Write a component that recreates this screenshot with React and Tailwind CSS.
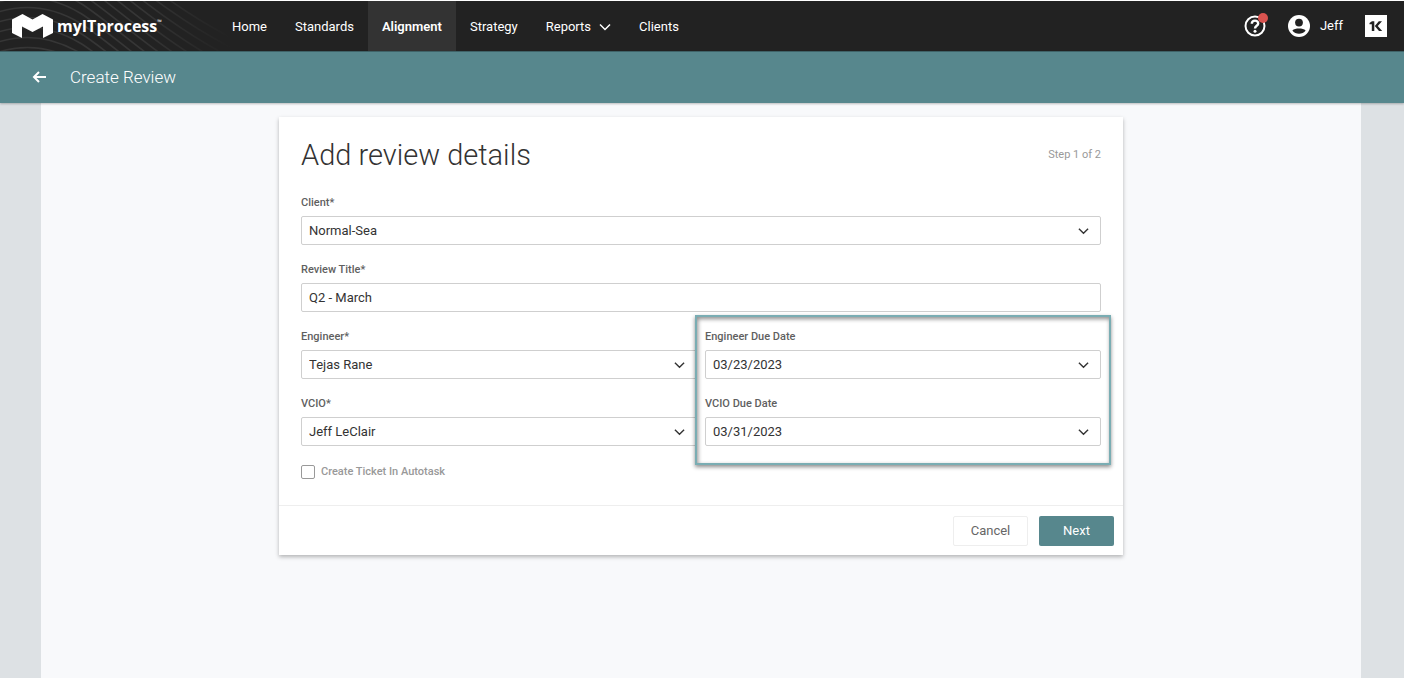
import React, { useState } from 'react';

const navItems = [
  { label: 'Home' },
  { label: 'Standards' },
  { label: 'Alignment', active: true },
  { label: 'Strategy' },
  { label: 'Reports', hasMenu: true },
  { label: 'Clients' },
];

const waveOffsets = [-2, -1, 0, 1, 2, 3, 4, 5, 6, 7, 8, 9, 10, 11];

const HeaderWaves = () => (
  <svg
    className="absolute left-0 top-0 h-[50px] w-[230px]"
    viewBox="0 0 230 50"
    fill="none"
    stroke="url(#wave-fade)"
    strokeWidth="1.6"
    aria-hidden="true"
  >
    <defs>
      <linearGradient id="wave-fade" gradientUnits="userSpaceOnUse" x1="0" y1="0" x2="230" y2="0">
        <stop offset="0" stopColor="#363636" />
        <stop offset="0.6" stopColor="#363636" />
        <stop offset="1" stopColor="#222222" />
      </linearGradient>
    </defs>
    {waveOffsets.map((n) => (
      <path key={n} d={`M-10 ${34 - n * 10} C20 ${22 - n * 10} 50 ${24 - n * 10} 80 ${42 - n * 10} S160 ${110 - n * 10} 230 ${146 - n * 10}`} />
    ))}
  </svg>
);

const LogoMark = () => (
  <svg className="h-6 w-[41px]" viewBox="0 0 41 24" fill="#ffffff" aria-hidden="true">
    <path d="M0 5.5 L10.5 0 L20.5 5.5 L30.5 0 L41 5.5 V19 L31 24 V12.5 L20.5 18 L10 12.5 V24 L0 19 Z" />
  </svg>
);

const HelpIcon = () => (
  <svg className="size-[22px]" viewBox="0 0 22 22" fill="none" stroke="#ffffff" aria-hidden="true">
    <circle cx="11" cy="11" r="9.5" strokeWidth="2" />
    <path d="M7.8 8.8 C7.8 4.6 14.2 4.6 14.2 8.5 C14.2 10.8 11 10.8 11 13.4" strokeWidth="2.4" />
    <circle cx="11" cy="16.3" r="1.5" fill="#ffffff" stroke="none" />
  </svg>
);

const AvatarIcon = () => (
  <svg className="size-[22px]" viewBox="0 0 22 22" aria-hidden="true">
    <circle cx="11" cy="11" r="11" fill="#ffffff" />
    <circle cx="11" cy="7.6" r="3.9" fill="#222222" />
    <path d="M4.4 15.4 C7 12.8 15 12.8 17.6 15.4 C14.6 19.8 7.4 19.8 4.4 15.4 Z" fill="#222222" />
  </svg>
);

const KaseyaIcon = () => (
  <svg className="size-[22px]" viewBox="0 0 22 22" aria-hidden="true">
    <rect width="22" height="22" fill="#ffffff" />
    <path d="M4.5 8 L7 6.2 H9.3 V16 H6.8 V9.2 H4.5 Z" fill="#222222" />
    <path d="M13.8 6.2 H17 L12.8 11 L17.2 16 H14 L9.8 11 Z" fill="#222222" />
  </svg>
);

const Chevron = ({ className }) => (
  <svg className={className} viewBox="0 0 12 8" fill="none" stroke="currentColor" aria-hidden="true">
    <path d="M1 1.5 L6 6.5 L11 1.5" strokeWidth="1.5" />
  </svg>
);

const fieldClass =
  'block h-[29px] w-full appearance-none rounded-[2px] border border-[#cfcfcf] bg-white px-[7px] text-[13px] text-[#333333] outline-none';

const Field = ({ id, label, children }) => (
  <div className="flex flex-col gap-[5px]">
    <label htmlFor={id} className="text-[11px] leading-4 font-medium text-[#5f5f5f]">
      {label}
    </label>
    {children}
  </div>
);

const SelectField = ({ id, label, value }) => (
  <Field id={id} label={label}>
    <div className="relative">
      <select id={id} defaultValue={value} className={fieldClass}>
        <option value={value}>{value}</option>
      </select>
      <Chevron className="pointer-events-none absolute top-[11px] right-3 h-2 w-[11px] text-[#333333]" />
    </div>
  </Field>
);

const Header = () => (
  <header className="relative flex h-[51px] items-center justify-between border-t border-white bg-[#222222] pr-[17px] pl-3 text-[13px] text-white">
    <HeaderWaves />
    <div className="relative flex h-full items-center">
      <a href="#home" className="flex w-[206px] items-center gap-1" aria-label="myITprocess">
        <LogoMark />
        <span className="flex items-start font-['Open_Sans',sans-serif] text-[16px] leading-5 font-bold">
          myITprocess
          <span className="text-[6px] leading-3">™</span>
        </span>
      </a>
      <nav className="flex h-full">
        {navItems.map((item) => (
          <a
            key={item.label}
            href={`#${item.label.toLowerCase()}`}
            className={
              item.active
                ? 'flex items-center bg-[#333333] px-[14px] pt-0.5 font-semibold'
                : 'flex items-center gap-2 px-[14px] pt-0.5'
            }
          >
            {item.label}
            {item.hasMenu && <Chevron className="h-2 w-3" />}
          </a>
        ))}
      </nav>
    </div>
    <div className="flex items-center gap-[22px]">
      <button type="button" className="relative" aria-label="Help">
        <HelpIcon />
        <span className="absolute -top-0.5 -right-0.5 size-[10px] rounded-full bg-[#d9534f]" />
      </button>
      <button type="button" className="flex items-center gap-[10px]">
        <AvatarIcon />
        Jeff
      </button>
      <button type="button" aria-label="Apps">
        <KaseyaIcon />
      </button>
    </div>
  </header>
);

const PageBar = () => (
  <div className="relative flex h-[52px] items-center gap-6 border-t border-[#3f6368] bg-[#57878d] pb-0.5 pl-8 text-white shadow-[0_1px_2px_rgba(0,0,0,0.25)]">
    <button type="button" aria-label="Back">
      <svg className="h-3 w-[14px]" viewBox="0 0 14 12" fill="none" stroke="currentColor" strokeWidth="2">
        <path d="M14 6 H2 M7 1 L2 6 L7 11" />
      </svg>
    </button>
    <h1 className="text-[17px] leading-6 font-light">Create Review</h1>
  </div>
);

const App = () => {
  const [title, setTitle] = useState('Q2 - March');
  const [createTicket, setCreateTicket] = useState(false);

  return (
    <div className="flex min-h-screen flex-col bg-[#dde1e4] font-['Roboto',sans-serif]">
      <Header />
      <PageBar />

      <main className="mr-[43px] ml-[41px] flex-1 bg-[#f8f9fb] pt-[14px]">
        <form
          className="mx-auto max-w-[844px] bg-white shadow-[0_2px_4px_rgba(0,0,0,0.28)]"
          onSubmit={(e) => e.preventDefault()}
        >
          <div className="px-[22px] pt-[22px] pb-[25px]">
            <div className="mb-6 flex items-center justify-between">
              <h2 className="text-[29px] leading-8 font-light text-[#333333]">Add review details</h2>
              <span className="text-[11px] text-[#999999]">Step 1 of 2</span>
            </div>

            <div className="flex flex-col gap-[17px]">
              <SelectField id="client" label="Client*" value="Normal-Sea" />
              <Field id="title" label="Review Title*">
                <input
                  id="title"
                  type="text"
                  value={title}
                  onChange={(e) => setTitle(e.target.value)}
                  className={fieldClass}
                />
              </Field>

              <div className="grid grid-cols-2 gap-2">
                <div className="flex flex-col gap-[17px]">
                  <SelectField id="engineer" label="Engineer*" value="Tejas Rane" />
                  <SelectField id="vcio" label="VCIO*" value="Jeff LeClair" />
                </div>
                <div className="relative flex flex-col gap-[17px]">
                  <SelectField id="engineer-due" label="Engineer Due Date" value="03/23/2023" />
                  <SelectField id="vcio-due" label="VCIO Due Date" value="03/31/2023" />
                  {/* Highlight around the due dates */}
                  <div className="pointer-events-none absolute -inset-x-[10px] -top-[14px] -bottom-[19px] border-2 border-[#7aadb3] shadow-[0_2px_4px_rgba(0,0,0,0.45),inset_1px_2px_4px_rgba(0,0,0,0.45)]" />
                </div>
              </div>
            </div>

            <label className="mt-[18px] flex w-fit items-center gap-[6px] text-[11px] leading-4 font-medium text-[#999999]">
              <input
                type="checkbox"
                checked={createTicket}
                onChange={(e) => setCreateTicket(e.target.checked)}
                className="size-[14px] appearance-none rounded-[2px] border border-[#999999] bg-white checked:bg-[#57878d]"
              />
              Create Ticket In Autotask
            </label>
          </div>

          <div className="flex justify-end gap-[11px] border-t border-[#eeeeee] pt-[10px] pr-[9px] pb-[9px] text-[13px]">
            <button
              type="button"
              className="h-[30px] w-[75px] rounded-[2px] border border-[#eeeeee] bg-white text-[#666666]"
            >
              Cancel
            </button>
            <button type="submit" className="h-[30px] w-[75px] rounded-[2px] bg-[#57878d] text-white">
              Next
            </button>
          </div>
        </form>
      </main>
    </div>
  );
};

export default App;
